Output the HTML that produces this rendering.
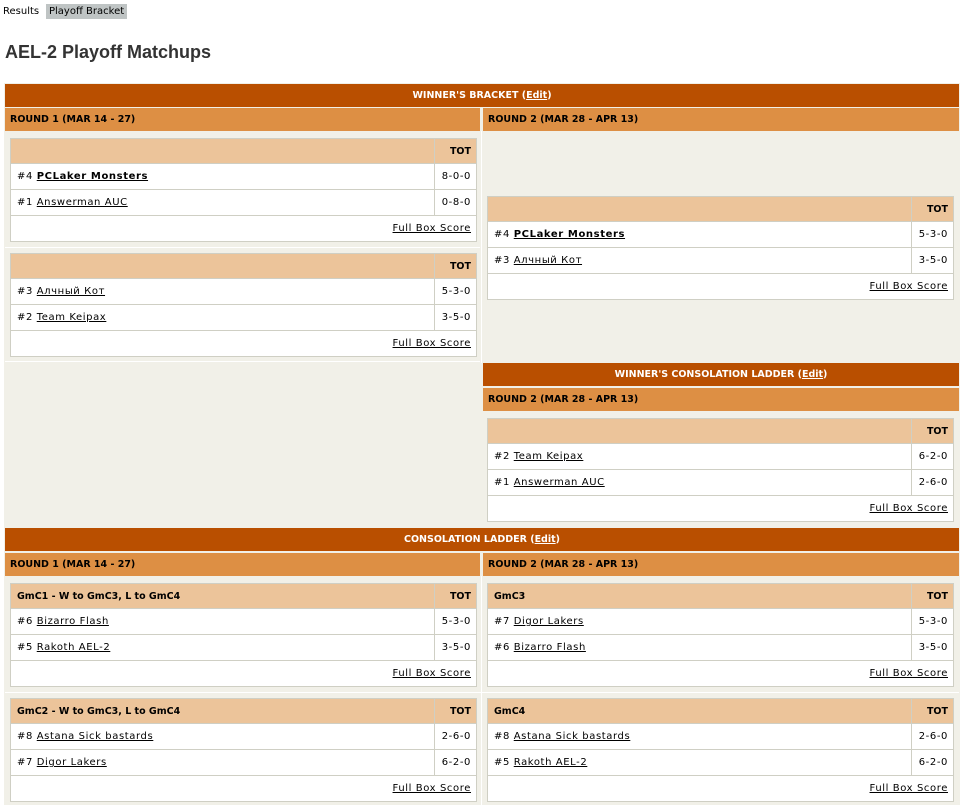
<!DOCTYPE html>
<html><head><meta charset="utf-8"><style>
body{margin:0;background:#fff;font-family:"DejaVu Sans",Verdana,sans-serif;font-size:10px;color:#000;width:962px;height:808px;position:relative;overflow:hidden}
.a{position:absolute}
.tab{font-size:10px;font-family:"DejaVu Sans",sans-serif}
h1{position:absolute;left:5px;top:42px;margin:0;font:bold 18px "Liberation Sans",Arial,sans-serif;color:#333}
.dk{background:#b94f00;color:#fff;font-weight:bold;text-align:center;font-size:9.5px;line-height:23px;height:23px}
.dk u{color:#fff}
.md{background:#dd8f44;font-weight:bold;font-size:9.5px;line-height:24px;height:23px;padding-left:5px;box-sizing:border-box}
.bg{background:#f1f0e8}
table.m{position:absolute;border-collapse:collapse;background:#fff;width:467px;font-size:10px;letter-spacing:0.6px}
table.m td{border:1px solid #cfcfc4;padding:0 6px;height:26px;box-sizing:border-box}
table.m tr.h td{background:#ecc49a;font-weight:bold;font-size:9.5px;height:25px;letter-spacing:0}
table.m td.s{width:42px;text-align:right;padding-right:5px;white-space:nowrap;letter-spacing:0.6px}
table.m td.f{text-align:right;padding-right:5px}
u{text-underline-offset:1px}
</style></head><body>
<div class="a tab" style="left:3px;top:6px">Results</div>
<div class="a tab" style="left:46px;top:4px;background:#bfc4c4;padding:2px 3px 2px">Playoff Bracket</div>
<h1>AEL-2 Playoff Matchups</h1>

<div class="a bg" style="left:4px;top:83px;width:956px;height:722px"></div>
<div class="a" style="left:481px;top:131px;width:1px;height:232px;background:#fff"></div>
<div class="a" style="left:481px;top:576px;width:1px;height:229px;background:#fff"></div>

<div class="a dk" style="left:5px;top:84px;width:954px">WINNER'S BRACKET (<u>Edit</u>)</div>
<div class="a md" style="left:5px;top:108px;width:475px">ROUND 1 (MAR 14 - 27)</div>
<div class="a md" style="left:483px;top:108px;width:476px">ROUND 2 (MAR 28 - APR 13)</div>

<table class="m" style="left:10px;top:138px"><tr class="h"><td></td><td class="s">TOT</td></tr>
<tr><td>#4 <b><u>PCLaker Monsters</u></b></td><td class="s">8-0-0</td></tr>
<tr><td>#1 <u>Answerman AUC</u></td><td class="s">0-8-0</td></tr>
<tr><td colspan="2" class="f"><u>Full Box Score</u></td></tr></table>
<div class="a" style="left:5px;top:247px;width:475px;height:1px;background:#fff"></div>
<table class="m" style="left:10px;top:253px"><tr class="h"><td></td><td class="s">TOT</td></tr>
<tr><td>#3 <u>Алчный Кот</u></td><td class="s">5-3-0</td></tr>
<tr><td>#2 <u>Team Keipax</u></td><td class="s">3-5-0</td></tr>
<tr><td colspan="2" class="f"><u>Full Box Score</u></td></tr></table>

<table class="m" style="left:487px;top:196px"><tr class="h"><td></td><td class="s">TOT</td></tr>
<tr><td>#4 <b><u>PCLaker Monsters</u></b></td><td class="s">5-3-0</td></tr>
<tr><td>#3 <u>Алчный Кот</u></td><td class="s">3-5-0</td></tr>
<tr><td colspan="2" class="f"><u>Full Box Score</u></td></tr></table>

<div class="a" style="left:5px;top:361px;width:475px;height:1px;background:#fff"></div>
<div class="a dk" style="left:483px;top:363px;width:476px">WINNER'S CONSOLATION LADDER (<u>Edit</u>)</div>
<div class="a md" style="left:483px;top:388px;width:476px">ROUND 2 (MAR 28 - APR 13)</div>
<table class="m" style="left:487px;top:418px"><tr class="h"><td></td><td class="s">TOT</td></tr>
<tr><td>#2 <u>Team Keipax</u></td><td class="s">6-2-0</td></tr>
<tr><td>#1 <u>Answerman AUC</u></td><td class="s">2-6-0</td></tr>
<tr><td colspan="2" class="f"><u>Full Box Score</u></td></tr></table>

<div class="a dk" style="left:5px;top:528px;width:954px">CONSOLATION LADDER (<u>Edit</u>)</div>
<div class="a md" style="left:5px;top:553px;width:475px">ROUND 1 (MAR 14 - 27)</div>
<div class="a md" style="left:483px;top:553px;width:476px">ROUND 2 (MAR 28 - APR 13)</div>

<table class="m" style="left:10px;top:583px"><tr class="h"><td>GmC1 - W to GmC3, L to GmC4</td><td class="s">TOT</td></tr>
<tr><td>#6 <u>Bizarro Flash</u></td><td class="s">5-3-0</td></tr>
<tr><td>#5 <u>Rakoth AEL-2</u></td><td class="s">3-5-0</td></tr>
<tr><td colspan="2" class="f"><u>Full Box Score</u></td></tr></table>
<table class="m" style="left:487px;top:583px"><tr class="h"><td>GmC3</td><td class="s">TOT</td></tr>
<tr><td>#7 <u>Digor Lakers</u></td><td class="s">5-3-0</td></tr>
<tr><td>#6 <u>Bizarro Flash</u></td><td class="s">3-5-0</td></tr>
<tr><td colspan="2" class="f"><u>Full Box Score</u></td></tr></table>
<div class="a" style="left:5px;top:692px;width:954px;height:1px;background:#fff"></div>
<table class="m" style="left:10px;top:698px"><tr class="h"><td>GmC2 - W to GmC3, L to GmC4</td><td class="s">TOT</td></tr>
<tr><td>#8 <u>Astana Sick bastards</u></td><td class="s">2-6-0</td></tr>
<tr><td>#7 <u>Digor Lakers</u></td><td class="s">6-2-0</td></tr>
<tr><td colspan="2" class="f"><u>Full Box Score</u></td></tr></table>
<table class="m" style="left:487px;top:698px"><tr class="h"><td>GmC4</td><td class="s">TOT</td></tr>
<tr><td>#8 <u>Astana Sick bastards</u></td><td class="s">2-6-0</td></tr>
<tr><td>#5 <u>Rakoth AEL-2</u></td><td class="s">6-2-0</td></tr>
<tr><td colspan="2" class="f"><u>Full Box Score</u></td></tr></table>
</body></html>
